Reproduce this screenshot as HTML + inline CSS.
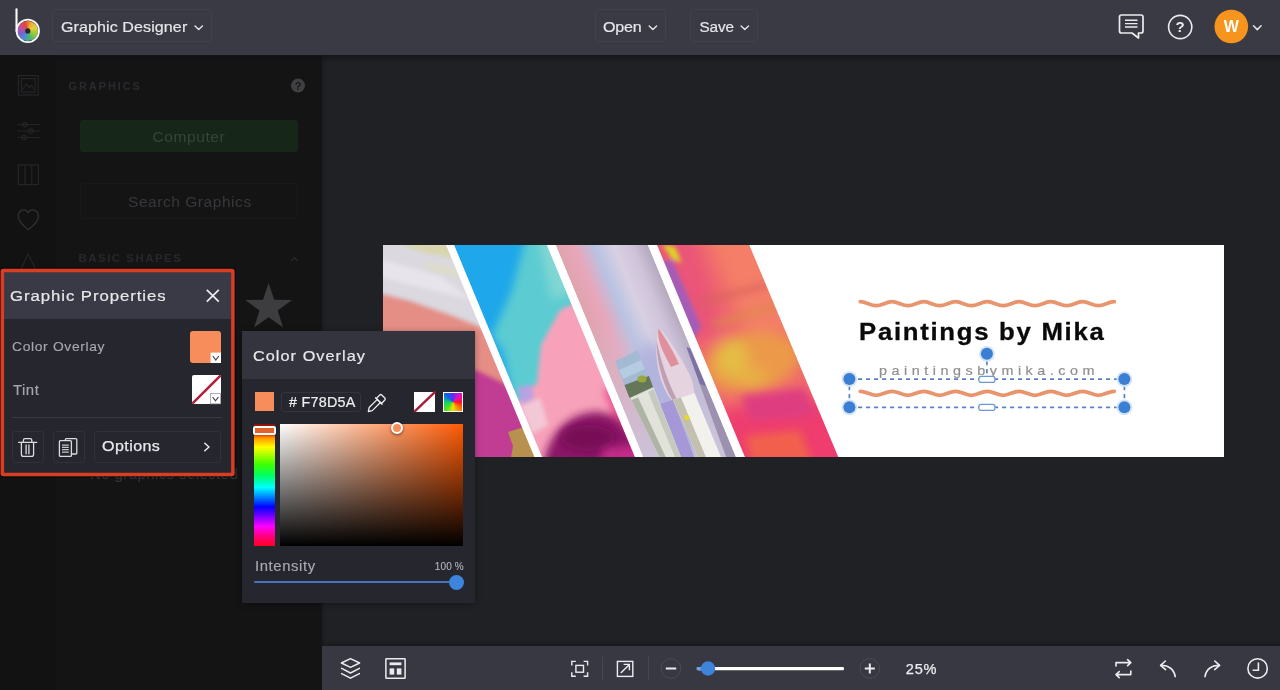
<!DOCTYPE html>
<html lang="en">
<head>
<meta charset="utf-8">
<title>Graphic Designer</title>
<style>
*{box-sizing:border-box;margin:0;padding:0}
html,body{width:1280px;height:690px;overflow:hidden;background:#202125;font-family:"Liberation Sans",sans-serif;color:#e6e6ea}
.abs{position:absolute}
.t{position:absolute;white-space:pre;line-height:1}
.t,svg{will-change:opacity}
#app{position:relative;width:1280px;height:690px;overflow:hidden;background:#202125}

/* top bar */
#topbar{left:0;top:0;width:1280px;height:55px;background:#393a43;z-index:5}
#topshadow{left:0;top:55px;width:1280px;height:8px;background:linear-gradient(#131316,rgba(19,19,22,0));z-index:4;opacity:.75}
.tbtn{position:absolute;top:9px;height:33px;border:1px solid #40414b;border-radius:3px}

/* sidebar */
#sidebar{left:0;top:55px;width:322px;height:635px;background:#141415}
#iconcol{left:0;top:0;width:56px;height:635px;background:#121213}

/* bottom bar */
#bottombar{left:322px;top:646px;width:958px;height:44px;background:#373841}
#botshadow{left:322px;top:640px;width:958px;height:6px;background:linear-gradient(rgba(19,19,22,0),#17181b);opacity:.8}

/* panels */
#gp{left:4px;top:272px;width:227px;height:201px;background:#25262e;z-index:8}
#gpb{left:0;top:264px;z-index:8}
#gp .hd{left:0;top:0;width:227px;height:47px;background:#393a45}
.sbtn{position:absolute;border:1px solid #30313a;border-radius:3px}
#co{left:242px;top:331px;width:233px;height:272px;background:#25262e;z-index:9;box-shadow:0 1px 6px rgba(0,0,0,.35)}
#co .hd{left:0;top:0;width:233px;height:48px;background:#33343e}
</style>
</head>
<body>
<div id="app">

<!-- ================= CANVAS ================= -->
<div id="canvas" class="abs" style="left:383px;top:245px;width:841px;height:212px;background:#fff;overflow:hidden">
<svg class="abs" style="left:0;top:0" width="841" height="212" viewBox="0 0 841 212">
  <defs>
    <clipPath id="p1"><polygon points="0,0 63.5,0 151.8,212 0,212"/></clipPath>
    <clipPath id="p2"><polygon points="70.7,0 164.2,0 252.3,212 158.6,212"/></clipPath>
    <clipPath id="p3"><polygon points="172.4,0 265.2,0 353.3,212 259.7,212"/></clipPath>
    <clipPath id="p4"><polygon points="273.6,0 366.7,0 455.7,212 361.5,212"/></clipPath>
    <filter id="b2" x="-20%" y="-20%" width="140%" height="140%"><feGaussianBlur stdDeviation="2"/></filter>
    <filter id="b4" x="-30%" y="-30%" width="160%" height="160%"><feGaussianBlur stdDeviation="4"/></filter>
    <filter id="b7" x="-40%" y="-40%" width="180%" height="180%"><feGaussianBlur stdDeviation="7"/></filter>
    <filter id="b1" x="-10%" y="-10%" width="120%" height="120%"><feGaussianBlur stdDeviation="0.7"/></filter>
    <linearGradient id="g3" x1="0" y1="0" x2="1" y2="0">
      <stop offset="0" stop-color="#dfa3ae"/><stop offset="0.2" stop-color="#e8a6ba"/>
      <stop offset="0.42" stop-color="#b9c3e2"/><stop offset="0.62" stop-color="#d9d0e3"/>
      <stop offset="0.82" stop-color="#cfc3d9"/><stop offset="1" stop-color="#b3a8be"/>
    </linearGradient>
    <linearGradient id="g3b" x1="0" y1="0" x2="0" y2="1">
      <stop offset="0.35" stop-color="#cdc6dc" stop-opacity="0"/><stop offset="1" stop-color="#cbc4da" stop-opacity="0.95"/>
    </linearGradient>
  </defs>

  <!-- photo 1 -->
  <g clip-path="url(#p1)">
    <rect width="160" height="212" fill="#dbd8e0"/>
    <g filter="url(#b2)">
      <polygon points="15,-2 69,-2 71,13 42,8" fill="#d8d5ae"/>
      <polygon points="37,17 77,23 79,33 47,26" fill="#dddcca"/>
      <polygon points="-8,13 57,31 89,55 -8,31" fill="#e7e4ec"/>
      <polygon points="-13,46 27,56 67,70 95,81 167,117 167,225 -13,225" fill="#e48e85"/>
    </g>
    <g filter="url(#b2)">
      <polygon points="-13,107 57,117 95,126 122,139 167,157 167,225 -13,225" fill="#c13c93"/>
    </g>
    <polygon points="125,187 141,182 148,195 157,219 127,219 130,201" fill="#b7914d" filter="url(#b1)"/>
  </g>

  <!-- photo 2 -->
  <g clip-path="url(#p2)">
    <rect x="60" width="200" height="212" fill="#1ea7ea"/>
    <g filter="url(#b4)">
      <polygon points="145,-15 197,-15 277,155 132,165 120,105 109,91 129,45" fill="#5bccd2"/>
      <polygon points="154,-13 173,-13 195,45 169,55" fill="#80d6d3"/>
    </g>
    <g filter="url(#b2)">
      <polygon points="207,51 177,65 158,100 154,138 137,153 122,175 137,235 297,235 277,155" fill="#f7a2ba"/>
      <polygon points="134,143 148,139 151,153 139,160" fill="#b7a2e2"/>
      <polygon points="137,161 157,153 165,180 149,189" fill="#f3c8d6"/>
    </g>
    <g filter="url(#b4)">
      <polygon points="221,145 247,135 282,205 242,200" fill="#ea4a90"/>
      <path d="M160 225 C163 187 189 166 215 167 C239 168 257 193 265 235 L155 235 Z" fill="#8a1566"/>
    </g>
    <ellipse cx="205" cy="193" rx="27" ry="13" fill="#780e56" filter="url(#b4)"/>
    <polygon points="221,203 267,199 277,225 215,225" fill="#c42a88" filter="url(#b4)"/>
  </g>

  <!-- photo 3 -->
  <g clip-path="url(#p3)">
    <rect x="172.4" y="0" width="92.8" height="212" fill="url(#g3)" transform="skewX(22.55)"/>
    <rect x="172" y="0" width="185" height="212" fill="url(#g3b)"/>
    <ellipse cx="285" cy="155" rx="26" ry="60" fill="#b2b4de" filter="url(#b7)" transform="rotate(-22 285 155)"/>
    <g filter="url(#b1)">
      <!-- thin brush -->
      <polygon points="303.5,102 308,104 333,163 355,217 345,217 326,165" fill="#9c92b0"/>
      <polygon points="303.5,102 307,103.5 323,141 317,139" fill="#7d6fa8"/>
      <!-- purple gap -->
      <polygon points="277,159 290,155 313,217 297,217" fill="#a698d6"/>
      <!-- flat brush -->
      <polygon points="232,116 254.5,105.5 270,142 246.5,153" fill="#a3bad2"/>
      <polygon points="236,125 258,115 262,124 240,134" fill="#b4cbe2"/>
      <polygon points="241.5,140 266,131 270,142 246.5,153" fill="#667658"/>
      <ellipse cx="259" cy="134" rx="4.5" ry="3.5" fill="#98a83e"/>
      <polygon points="247.5,153 270.5,142.5 300,217 279,217" fill="#e1e3da"/>
      <polygon points="248.5,155 255,152.5 285,217 279,217" fill="#aeb4a6"/>
      <polygon points="265,147 270.5,144 300,217 294,217" fill="#c6cabe"/>
      <!-- round brush -->
      <path d="M276 83.5 C283 88 304 121 309.5 137 L311.5 148.5 L288.5 155 C275 139 269.5 105 276 83.5 Z" fill="#e6d3e0"/>
      <path d="M275.5 83.5 C280 89 291 107 296 119 L288 122 C280 107 273.5 95 275.5 83.5 Z" fill="#de909c"/>
      <path d="M273.6 95 C273 111 278 137 289.5 155 L293.5 153.60000000000002 C283 133 277 113 273.6 95 Z" fill="#bfa0b2"/>
      <polygon points="290,155 311.5,148 340,217 317,217" fill="#f2f1ed"/>
      <polygon points="290,155 298,152.5 325,217 317,217" fill="#c4c0b0"/>
      <circle cx="303.70000000000005" cy="172.60000000000002" r="2.7" fill="#e6d62e"/>
    </g>
  </g>

  <!-- photo 4 -->
  <g clip-path="url(#p4)">
    <rect x="270" width="190" height="212" fill="#f0686c"/>
    <g filter="url(#b7)">
      <polygon points="322,-15 397,-15 437,85 362,85" fill="#f47e68"/>
      <ellipse cx="369" cy="117" rx="50" ry="30" fill="#ec9a4a" transform="rotate(-12 369 117)"/>
      <ellipse cx="349" cy="113" rx="16" ry="20" fill="#e4bc44"/>
      <ellipse cx="369" cy="133" rx="16" ry="10" fill="#e8b044"/>
      <polygon points="332,165 477,151 477,235 342,235" fill="#ee3c6e"/>
      <polygon points="262,-15 309,-15 341,85 313,100" fill="#ea5478"/>
    </g>
    <g filter="url(#b2)">
      <polygon points="277,17 289,15 318,81 309,99" fill="#a45cb8"/>
      <polygon points="279,-1 292,2 299,18 289,14" fill="#dcd428"/>
    </g>
    <g filter="url(#b4)">
      <polygon points="357,151 422,143 432,171 367,175" fill="#de3c80"/>
      <polygon points="362,191 417,185 429,217 369,217" fill="#f2604e"/>
      <polygon points="317,55 387,37 389,41 319,60" fill="#d8605c"/>
      <polygon points="329,77 407,55 409,59 331,82" fill="#dc8a4a"/>
    </g>
  </g>

  <!-- white separators -->
  <polygon points="63.1,0 71.1,0 159,212 151.4,212" fill="#fff"/>
  <polygon points="163.8,0 172.8,0 260.1,212 251.9,212" fill="#fff"/>
  <polygon points="264.8,0 274,0 361.9,212 352.9,212" fill="#fff"/>
  <polygon points="366.3,0 380,0 470,212 455.3,212" fill="#fff"/>
  <!-- waves -->
  <path d="M477.3 56.70 C483.08 56.70 487.39 60.70 493.17 60.70 C498.96 60.70 503.27 56.70 509.05 56.70 C514.83 56.70 519.14 60.70 524.92 60.70 C530.71 60.70 535.02 56.70 540.80 56.70 C546.58 56.70 550.89 60.70 556.67 60.70 C562.46 60.70 566.77 56.70 572.55 56.70 C578.33 56.70 582.64 60.70 588.42 60.70 C594.21 60.70 598.52 56.70 604.30 56.70 C610.08 56.70 614.39 60.70 620.17 60.70 C625.96 60.70 630.27 56.70 636.05 56.70 C641.83 56.70 646.14 60.70 651.92 60.70 C657.71 60.70 662.02 56.70 667.80 56.70 C673.58 56.70 677.89 60.70 683.67 60.70 C689.46 60.70 693.77 56.70 699.55 56.70 C705.33 56.70 709.64 60.70 715.42 60.70 C721.21 60.70 725.52 56.70 731.30 56.70" fill="none" stroke="#e8946c" stroke-width="3.8" stroke-linecap="round"/>
  <path d="M477.3 146.30 C483.08 146.30 487.39 150.30 493.17 150.30 C498.96 150.30 503.27 146.30 509.05 146.30 C514.83 146.30 519.14 150.30 524.92 150.30 C530.71 150.30 535.02 146.30 540.80 146.30 C546.58 146.30 550.89 150.30 556.67 150.30 C562.46 150.30 566.77 146.30 572.55 146.30 C578.33 146.30 582.64 150.30 588.42 150.30 C594.21 150.30 598.52 146.30 604.30 146.30 C610.08 146.30 614.39 150.30 620.17 150.30 C625.96 150.30 630.27 146.30 636.05 146.30 C641.83 146.30 646.14 150.30 651.92 150.30 C657.71 150.30 662.02 146.30 667.80 146.30 C673.58 146.30 677.89 150.30 683.67 150.30 C689.46 150.30 693.77 146.30 699.55 146.30 C705.33 146.30 709.64 150.30 715.42 150.30 C721.21 150.30 725.52 146.30 731.30 146.30" fill="none" stroke="#e8946c" stroke-width="3.8" stroke-linecap="round"/>
</svg>
<span class="t" style="left:476.40px;top:75.69px;font-size:23.4px;color:#0a0a0a;letter-spacing:1.56px;font-weight:700;transform:scaleX(1.1);transform-origin:0 0;-webkit-text-stroke:0.3px #0a0a0a">Paintings by Mika</span>
<span class="t" style="left:496.10px;top:119.53px;font-size:12.6px;color:#909090;letter-spacing:3.97px;transform:scaleX(1.14);transform-origin:0 0;-webkit-text-stroke:0.2px #909090">paintingsbymika.com</span>
</div>
<svg class="abs" style="left:830px;top:340px;z-index:3" width="320" height="80" viewBox="830 340 320 80">
  <g fill="none" stroke="#5a84ba" stroke-width="1.7" stroke-dasharray="4.2 3.8">
    <path d="M858 379.1 H1117"/>
    <path d="M858 407.3 H1117"/>
    <path d="M849.4 386 V401"/>
    <path d="M1124.4 386 V401"/>
    <path d="M986.9 361 V376"/>
  </g>
  <rect x="978.9" y="376.4" width="16" height="6" rx="2.2" fill="#fff" stroke="#6a98d6" stroke-width="1.2"/>
  <rect x="978.9" y="404.4" width="16" height="6" rx="2.2" fill="#fff" stroke="#6a98d6" stroke-width="1.2"/>
  <circle cx="849.4" cy="379.1" r="7.9" fill="#d3e2f7" opacity="0.95"/><circle cx="849.4" cy="379.1" r="6" fill="#3a7fd4"/>
  <circle cx="849.4" cy="407.3" r="7.9" fill="#d3e2f7" opacity="0.95"/><circle cx="849.4" cy="407.3" r="6" fill="#3a7fd4"/>
  <circle cx="1124.4" cy="379.1" r="7.9" fill="#d3e2f7" opacity="0.95"/><circle cx="1124.4" cy="379.1" r="6" fill="#3a7fd4"/>
  <circle cx="1124.4" cy="407.3" r="7.9" fill="#d3e2f7" opacity="0.95"/><circle cx="1124.4" cy="407.3" r="6" fill="#3a7fd4"/>
  <circle cx="986.9" cy="353.8" r="7.9" fill="#d3e2f7" opacity="0.95"/><circle cx="986.9" cy="353.8" r="6" fill="#3a7fd4"/>
</svg>

<div class="abs" style="left:322px;top:55px;width:5px;height:591px;background:linear-gradient(to right,#1b1c1f,#202125)"></div>
<!-- ================= SIDEBAR ================= -->
<div id="sidebar" class="abs">
<div id="iconcol" class="abs"></div>
<div class="abs" style="left:80px;top:65px;width:218px;height:32px;border-radius:3px;background:#16271a"></div>
<div class="abs" style="left:80px;top:128px;width:218px;height:36px;border-radius:3px;border:1px solid #19191b"></div>
<span class="t" style="left:68.5px;top:25.5px;font-size:11px;color:#2b2b2f;letter-spacing:1.9px;font-weight:700">GRAPHICS</span>
<span class="t" style="left:152.5px;top:73.5px;font-size:15.5px;color:#35463a;letter-spacing:0.6px">Computer</span>
<span class="t" style="left:128.0px;top:139.1px;font-size:15.5px;color:#38383c;letter-spacing:0.55px">Search Graphics</span>
<span class="t" style="left:78.6px;top:197.9px;font-size:11.5px;color:#28282c;letter-spacing:1.45px;font-weight:700">BASIC SHAPES</span>
<span class="t" style="left:90.0px;top:411.3px;font-size:15px;color:#38383c;letter-spacing:0.4px">No graphics selected</span>
<svg class="abs" style="left:0;top:0" width="322" height="635" viewBox="0 55 322 635">
  <g fill="none" stroke="#252528" stroke-width="1.2">
    <rect x="18.4" y="75.6" width="19.8" height="19.4"/>
    <rect x="21.4" y="78.6" width="13.8" height="13.4"/>
    <path d="M22 90 L26.5 84 L29.5 87.5 L31.5 85.5 L34.5 90"/>
    <path d="M17.5 124.5 H39.5 M17.5 131 H39.5 M17.5 137.5 H39.5"/>
    <circle cx="25" cy="124.5" r="2.2"/><circle cx="31" cy="131" r="2.2"/><circle cx="24" cy="137.5" r="2.2"/>
    <rect x="18.4" y="165" width="20" height="19.6"/>
    <path d="M25 165 V184.6 M31.8 165 V184.6"/>
    <path d="M28.3 229.6 C22 225 18.2 221 18.2 216 C18.2 212.4 20.8 209.8 23.8 209.8 C25.8 209.8 27.4 210.8 28.3 212.6 C29.2 210.8 30.8 209.8 32.8 209.8 C35.8 209.8 38.4 212.4 38.4 216 C38.4 221 34.6 225 28.3 229.6 Z" stroke="#323236" stroke-width="1.3"/>
    <path d="M28.2 254 L19.5 272 H37 Z"/>
    <path d="M291 261.2 L294.4 257.6 L297.8 261.2" stroke="#2a2a2e" stroke-width="1.3"/>
  </g>
  <circle cx="298" cy="85.6" r="7" fill="#404043"/>
  <text x="298" y="89.6" text-anchor="middle" font-family="Liberation Sans, sans-serif" font-weight="700" font-size="11" fill="#161719">?</text>
  <polygon points="268.6,283.0 274.2,299.8 292.0,300.0 277.7,310.6 283.1,327.5 268.6,317.2 254.1,327.5 259.5,310.6 245.2,300.0 263.0,299.8" fill="#3d3d40"/>
</svg>
</div>

<!-- ================= TOP BAR ================= -->
<div id="topshadow" class="abs"></div>
<div id="topbar" class="abs">
<div class="abs" style="left:17.4px;top:20.5px;width:20.8px;height:20.8px;border-radius:50%;background:conic-gradient(from 20deg,#f0a62a,#e3d23a 12%,#9ccb3c 25%,#4fb66a 38%,#4a8fd6 52%,#7a62c8 64%,#c24fa0 76%,#e0453a 90%,#f0a62a)"></div>
<svg class="abs" style="left:0;top:0" width="56" height="55" viewBox="0 0 56 55">
  <circle cx="27.8" cy="30.9" r="2.6" fill="#26262c"/>
  <circle cx="27.8" cy="30.9" r="11.2" fill="none" stroke="#fbfbfb" stroke-width="1.8"/>
  <path d="M16.5 9.2 V31" fill="none" stroke="#fbfbfb" stroke-width="2.1" stroke-linecap="round"/>
</svg>
<div class="tbtn" style="left:52px;width:160px"></div>
<span class="t" style="left:61.30px;top:19.45px;font-size:15.3px;color:#e6e6ea;letter-spacing:0.08px;transform:scaleX(1.05);transform-origin:0 0;-webkit-text-stroke:0.2px #e6e6ea">Graphic Designer</span>
<svg class="abs" style="left:193px;top:22px" width="12" height="12" viewBox="0 0 12 12"><path d="M2 3.9 L5.7 7.5 L9.4 3.9" fill="none" stroke="#e4e4e8" stroke-width="1.4" stroke-linecap="round" stroke-linejoin="round"/></svg>
<div class="tbtn" style="left:595px;width:71px"></div>
<span class="t" style="left:603.30px;top:19.45px;font-size:15.3px;color:#e6e6ea;letter-spacing:-0.19px;transform:scaleX(1.05);transform-origin:0 0;-webkit-text-stroke:0.2px #e6e6ea">Open</span>
<svg class="abs" style="left:647px;top:22px" width="12" height="12" viewBox="0 0 12 12"><path d="M2.2 3.9 L5.9 7.5 L9.6 3.9" fill="none" stroke="#e4e4e8" stroke-width="1.4" stroke-linecap="round" stroke-linejoin="round"/></svg>
<div class="tbtn" style="left:690px;width:68px"></div>
<span class="t" style="left:699.50px;top:19.45px;font-size:15.3px;color:#e6e6ea;letter-spacing:-0.16px;-webkit-text-stroke:0.2px #e6e6ea">Save</span>
<svg class="abs" style="left:739px;top:22px" width="12" height="12" viewBox="0 0 12 12"><path d="M2.1 3.9 L5.8 7.5 L9.5 3.9" fill="none" stroke="#e4e4e8" stroke-width="1.4" stroke-linecap="round" stroke-linejoin="round"/></svg>

<svg class="abs" style="left:1110px;top:0" width="170" height="55" viewBox="1110 0 170 55">
  <!-- chat -->
  <path d="M1121.5 15 H1141 a2 2 0 0 1 2 2 V31 a2 2 0 0 1 -2 2 H1138.5 V38 L1132 33 H1121.5 a2 2 0 0 1 -2 -2 V17 a2 2 0 0 1 2 -2 Z" fill="none" stroke="#ececf0" stroke-width="1.7" stroke-linejoin="round"/>
  <path d="M1125 20.2 H1137.5 M1125 23.6 H1137.5 M1125 27 H1137.5" stroke="#ececf0" stroke-width="1.4" fill="none"/>
  <!-- help -->
  <circle cx="1180.2" cy="27" r="11.6" fill="none" stroke="#ececf0" stroke-width="1.6"/>
  <text x="1180.2" y="32.4" text-anchor="middle" font-family="Liberation Sans, sans-serif" font-weight="700" font-size="15" fill="#ececf0">?</text>
  <!-- avatar -->
  <circle cx="1231.3" cy="26.5" r="16.8" fill="#f7941d"/>
  <text x="1231.3" y="32.3" text-anchor="middle" font-family="Liberation Sans, sans-serif" font-weight="700" font-size="16" fill="#fff">W</text>
  <path d="M1253.5 25.8 L1257.3 29.6 L1261.1 25.8" fill="none" stroke="#e4e4e8" stroke-width="1.5" stroke-linecap="round" stroke-linejoin="round"/>
</svg>
</div>

<!-- ================= BOTTOM BAR ================= -->
<div id="botshadow" class="abs"></div>
<div id="bottombar" class="abs">
<svg class="abs" style="left:0;top:0" width="958" height="44" viewBox="322 646 958 44">
  <g fill="none" stroke="#ececf0" stroke-width="1.5" stroke-linejoin="round" stroke-linecap="round">
    <!-- layers -->
    <path d="M350.5 658.6 L359.6 663 L350.5 667.4 L341.4 663 Z"/>
    <path d="M341.6 668.4 L350.5 673 L359.4 668.4"/>
    <path d="M341.6 673.6 L350.5 678.2 L359.4 673.6"/>
    <!-- template -->
    <rect x="385.9" y="658.8" width="19.2" height="19.4" rx="0.5"/>
  </g>
  <rect x="389.6" y="662.4" width="11.8" height="2.8" fill="#ececf0"/>
  <rect x="389.6" y="668.4" width="4.6" height="6.2" fill="#ececf0"/>
  <rect x="396.8" y="668.4" width="4.6" height="6.2" fill="#ececf0"/>
  <g fill="none" stroke="#ececf0" stroke-width="1.4">
    <!-- fit -->
    <path d="M571.8 665.4 V661.4 H575.8 M583.6 661.4 H587.6 V665.4 M587.6 672.2 V676.2 H583.6 M575.8 676.2 H571.8 V672.2"/>
    <rect x="575.9" y="665.4" width="7.6" height="6.8"/>
    <!-- expand -->
    <rect x="617.4" y="661.4" width="15.4" height="15"/>
    <path d="M620.8 673 L629.4 664.4 M623.6 664.4 H629.4 V670.2"/>
  </g>
  <path d="M602.5 656.5 V680 M648.5 656.5 V680" stroke="#464751" stroke-width="1" fill="none"/>
  <!-- minus -->
  <circle cx="671" cy="668.5" r="9.8" fill="none" stroke="#4b4c57" stroke-width="1"/>
  <path d="M665.8 668.5 H676.2" stroke="#ececf0" stroke-width="2" fill="none"/>
  <!-- slider -->
  <rect x="697" y="667" width="147" height="3.2" rx="1.2" fill="#fff"/>
  <rect x="696.5" y="667" width="6" height="3.2" rx="1.2" fill="#6f9fdc"/>
  <circle cx="708" cy="668.5" r="7.2" fill="#3d84dc"/>
  <!-- plus -->
  <circle cx="869.8" cy="668.5" r="9.8" fill="none" stroke="#4b4c57" stroke-width="1"/>
  <path d="M864.8 668.5 H874.8 M869.8 663.5 V673.5" stroke="#ececf0" stroke-width="2" fill="none"/>
  <g fill="none" stroke="#ececf0" stroke-width="1.6" stroke-linejoin="round" stroke-linecap="round">
    <!-- swap -->
    <path d="M1116 666 V662.6 H1130.6 M1127.6 659.6 L1130.8 662.6 L1127.6 665.6"/>
    <path d="M1130.8 671 V674.6 H1116.2 M1119.2 671.6 L1116 674.6 L1119.2 677.6"/>
    <!-- undo -->
    <path d="M1165.4 661 L1160.6 665.4 L1165.6 669.6"/>
    <path d="M1161 665.4 C1168 665 1174 669 1175.2 676.6"/>
    <!-- redo -->
    <path d="M1214.8 661 L1219.6 665.4 L1214.6 669.6"/>
    <path d="M1219.2 665.4 C1212.2 665 1206.2 669 1205 676.6"/>
    <!-- clock -->
    <circle cx="1257.6" cy="668.4" r="9.7"/>
    <path d="M1258.4 662.6 V670.2 H1252.6" stroke-linecap="butt" stroke-linejoin="miter"/>
  </g>
</svg>
<span class="t" style="left:583.80px;top:15.54px;font-size:14.6px;color:#ececf0;letter-spacing:0.79px;-webkit-text-stroke:0.25px #ececf0">25%</span>
</div>

<!-- ================= GRAPHIC PROPERTIES ================= -->
<div id="gp" class="abs">
<div class="hd abs"></div>
<span class="t" style="left:5.90px;top:15.68px;font-size:15.5px;color:#e8e8ec;letter-spacing:0.87px;transform:scaleX(1.08);transform-origin:0 0;-webkit-text-stroke:0.2px #e8e8ec">Graphic Properties</span>
<span class="t" style="left:7.80px;top:68.76px;font-size:12.8px;color:#a6a6ae;letter-spacing:0.62px;transform:scaleX(1.08);transform-origin:0 0;-webkit-text-stroke:0.15px #a6a6ae">Color Overlay</span>
<span class="t" style="left:8.80px;top:112.42px;font-size:13.8px;color:#a6a6ae;letter-spacing:0.46px;transform:scaleX(1.08);transform-origin:0 0;-webkit-text-stroke:0.15px #a6a6ae">Tint</span>
<div class="abs" style="left:186px;top:59px;width:31px;height:32px;border-radius:3px;background:#f78d5a"></div>
<div class="abs" style="left:188px;top:103px;width:29px;height:29px;border-radius:2px;background:#fff"></div>
<div class="abs" style="left:8px;top:145px;width:210px;height:1px;background:#383943"></div>
<div class="sbtn" style="left:7.5px;top:159px;width:32px;height:32px"></div>
<div class="sbtn" style="left:48.5px;top:159px;width:32px;height:32px"></div>
<div class="sbtn" style="left:89.5px;top:159px;width:127.5px;height:32px"></div>
<span class="t" style="left:97.70px;top:166.94px;font-size:14.6px;color:#e8e8ec;letter-spacing:0.39px;transform:scaleX(1.1);transform-origin:0 0;-webkit-text-stroke:0.25px #e8e8ec">Options</span>
<svg class="abs" style="left:0;top:0" width="227" height="201" viewBox="4 272 227 201">
  <path d="M206.8 289.8 L218.8 301.6 M218.8 289.8 L206.8 301.6" stroke="#ececf0" stroke-width="1.7" fill="none"/>
  <!-- color swatch dropdown -->
  <rect x="210.6" y="352.6" width="10.4" height="10.4" fill="#fff"/>
  <path d="M212.8 356 L215.8 360 L218.8 356" stroke="#44454f" stroke-width="1.2" fill="none"/>
  <!-- tint swatch -->
  <path d="M192.6 403.4 L220.4 375.6" stroke="#b21f3d" stroke-width="2.6" fill="none"/>
  <rect x="210.4" y="393.6" width="10.2" height="10.2" fill="#fff" stroke="#9a9aa2" stroke-width="0.8"/>
  <path d="M212.6 397 L215.5 400.8 L218.4 397" stroke="#44454f" stroke-width="1.2" fill="none"/>
  <!-- trash -->
  <g fill="none" stroke="#dcdce0" stroke-width="1.3" stroke-linejoin="round" stroke-linecap="round">
    <path d="M18.6 442.3 H36.8"/>
    <path d="M23.4 442.2 V440.2 a1.6 1.6 0 0 1 1.6 -1.6 H30.2 a1.6 1.6 0 0 1 1.6 1.6 V442.2"/>
    <path d="M21.4 442.4 V454.2 a2.2 2.2 0 0 0 2.2 2.2 H31.4 a2.2 2.2 0 0 0 2.2 -2.2 V442.4"/>
    <path d="M26.1 445 V453.8 M28.9 445 V453.8"/>
    <!-- copy -->
    <path d="M65.4 440 V439.6 a1 1 0 0 1 1 -1 H75.8 a1 1 0 0 1 1 1 V453 a1 1 0 0 1 -1 1 H72"/>
    <rect x="59.4" y="440.6" width="12" height="15.8" rx="1"/>
  </g>
  <path d="M62 445.2 H68.8 M62 447.4 H68.8 M62 449.6 H68.8 M62 452.2 H68.8" stroke="#c8c8cc" stroke-width="1.2" fill="none"/>
  <!-- options chevron -->
  <path d="M204.8 443.2 L209 447 L204.8 450.8" stroke="#ececf0" stroke-width="1.5" fill="none" stroke-linecap="round" stroke-linejoin="round"/>
</svg>
</div>

<svg id="gpb" class="abs" width="240" height="218" viewBox="0 264 240 218"><rect x="0.6" y="268.6" width="234.2" height="207.6" fill="none" stroke="#000" stroke-opacity=".4" stroke-width="2.4"/><rect x="2.35" y="270.45" width="230.5" height="204" rx="1" fill="none" stroke="#d93d24" stroke-width="3.5"/></svg>

<!-- ================= COLOR OVERLAY ================= -->
<div id="co" class="abs">
<div class="hd abs"></div>
<span class="t" style="left:10.50px;top:17.53px;font-size:14.5px;color:#e8e8ec;letter-spacing:0.94px;transform:scaleX(1.12);transform-origin:0 0;-webkit-text-stroke:0.2px #e8e8ec">Color Overlay</span>
<div class="abs" style="left:13px;top:61px;width:19px;height:19px;background:#f78d5a"></div>
<div class="abs" style="left:39px;top:60.5px;width:80px;height:20px;border:1px solid #33343d;border-radius:3px"></div>
<span class="t" style="left:46.70px;top:64.82px;font-size:13.8px;color:#ececf0;letter-spacing:0.23px;transform:scaleX(1.04);transform-origin:0 0;-webkit-text-stroke:0.2px #ececf0"># F78D5A</span>
<div class="abs" style="left:172px;top:61px;width:21px;height:20px;background:#fff"></div>
<div class="abs" style="left:201px;top:61px;width:20px;height:20px;border:1.5px solid #fff;background:conic-gradient(from 0deg,#5a2cf0,#e010c8 12%,#ff1030 25%,#ff7a00 37%,#e8e800 50%,#50e020 62%,#10d070 75%,#1060f0 88%,#5a2cf0)"></div>
<div class="abs" style="left:12px;top:93px;width:21px;height:122px;background:linear-gradient(to bottom,#8e1208 0%,#c42008 4%,#ff3a00 8%,#ffa000 12%,#ffff00 19%,#40ff00 33%,#00ff60 42%,#00ffff 52%,#0060ff 62%,#0000ff 68%,#8000ff 76%,#ff00ff 84%,#ff0080 92%,#ff0020 100%)"></div>
<div class="abs" style="left:38px;top:93px;width:183px;height:122px;background:linear-gradient(to bottom,rgba(0,0,0,0),#000),linear-gradient(to right,#fff,#ff5a05)"></div>
<div class="abs" style="left:11px;top:95px;width:22.5px;height:9px;border:2px solid #fff;border-radius:2px;background:#e2602c;box-shadow:0 0 2px rgba(0,0,0,.5)"></div>
<div class="abs" style="left:148.6px;top:91.4px;width:12px;height:12px;border:2.4px solid #fff;border-radius:50%;background:#f78d5a;box-shadow:0 1px 3px rgba(0,0,0,.55)"></div>
<span class="t" style="left:12.80px;top:228.45px;font-size:14px;color:#a9a9b0;letter-spacing:0.58px;transform:scaleX(1.06);transform-origin:0 0;-webkit-text-stroke:0.15px #a9a9b0">Intensity</span>
<span class="t" style="left:192.70px;top:231.03px;font-size:10px;color:#b6b6bc;letter-spacing:0.16px;-webkit-text-stroke:0.1px #b6b6bc">100 %</span>
<div class="abs" style="left:11.5px;top:250px;width:206px;height:2px;background:#4775bd;border-radius:1px"></div>
<div class="abs" style="left:207px;top:243.5px;width:15px;height:15px;border-radius:50%;background:#3d85dc"></div>
<svg class="abs" style="left:0;top:0" width="233" height="272" viewBox="242 331 233 272">
  <path d="M414.2 411.8 L435.4 391.6" stroke="#a81c38" stroke-width="2.4" fill="none"/>
  <!-- eyedropper -->
  <g transform="translate(375.8 404) rotate(45)" fill="none" stroke="#ececf0" stroke-width="1.3" stroke-linejoin="round" stroke-linecap="round">
    <path d="M-2.2 -10.6 h4.4 a1.4 1.4 0 0 1 1.4 1.4 V-4.4 H-3.6 V-9.2 a1.4 1.4 0 0 1 1.4 -1.4 Z"/>
    <path d="M-4.6 -4.2 H4.6"/>
    <path d="M-2.2 -4 V7.2 L0 10.6 L2.2 7.2 V-4"/>
  </g>
</svg>
</div>

</div>
</body>
</html>
